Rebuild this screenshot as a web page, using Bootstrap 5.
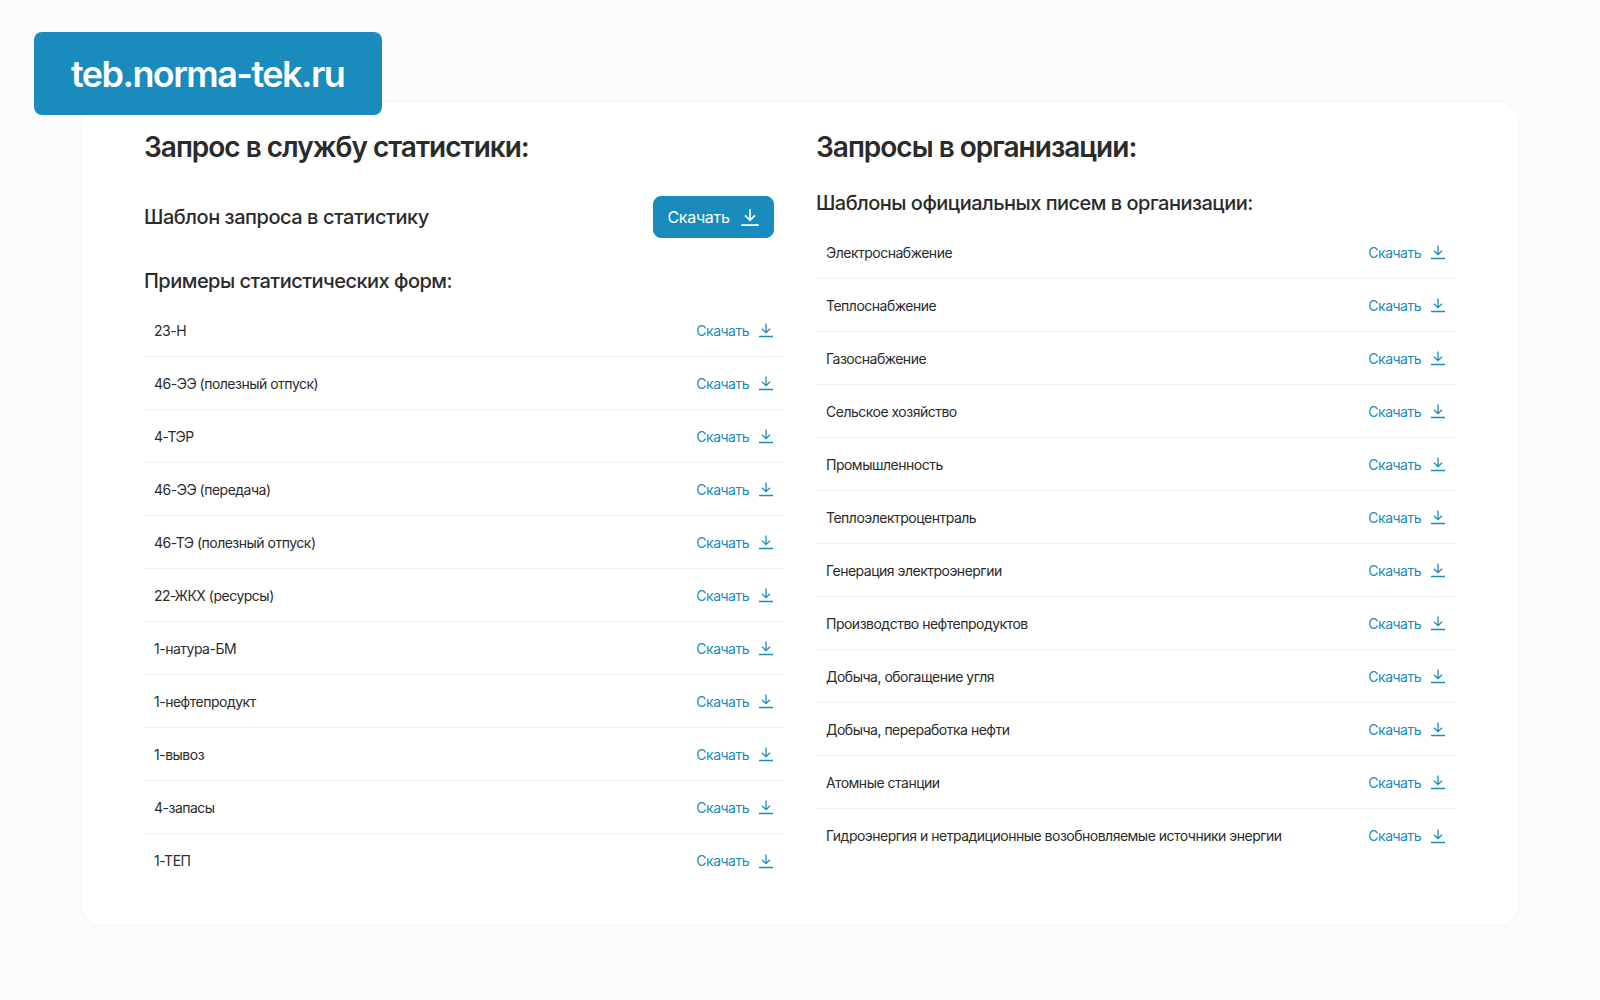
<!DOCTYPE html>
<html lang="ru"><head><meta charset="utf-8"><title>teb.norma-tek.ru</title>
<link href="https://cdn.jsdelivr.net/npm/bootstrap@5.3.0/dist/css/bootstrap.min.css" rel="stylesheet">
<style>
html,body{height:100%}
body{background:#fbfbfb;font-family:Inter,"Liberation Sans",sans-serif;color:#2b2b2b;overflow:hidden}
.page-wrap{padding:101px 81px 0;position:relative}
.site-tag{position:absolute;left:34px;top:32px;width:348px;height:83px;background:#1a8bbd;color:#fff;border-radius:8px;font-size:36px;font-weight:600;letter-spacing:-1.55px;line-height:85px;padding-left:37px}
.sheet{background:#fff;border:1px solid #f5f5f5;border-radius:20px;height:825px;padding:23px 62px 0;display:grid;grid-template-columns:640px 640px;column-gap:32px}
.col-title{font-size:28px;font-weight:600;line-height:44px;margin:0;letter-spacing:-1px;color:#2b2b2b}
.tpl-line{height:42px;margin-top:27px;padding-right:10px}
.tpl-name{font-size:20px;font-weight:450;line-height:24px;letter-spacing:-.46px}
.get-btn{width:121px;height:42px;background:#1a8bbd;border-color:#1a8bbd;color:#fff;border-radius:8px;font-size:16px;padding:0;letter-spacing:-.3px;gap:10px}
.get-btn:hover{background:#1a8bbd;color:#fff}
.sub-title{font-size:20px;font-weight:450;line-height:24px;margin:0;letter-spacing:-.52px}
.sub-a{margin-top:31px}
.sub-b{margin-top:22px}
.doc-list{margin-top:11px}
.doc-line{height:53px;padding:0 10px;border:0;border-bottom:1px solid #efefef;border-radius:0;font-size:14px;color:#2b2b2b;background:transparent;letter-spacing:-.5px}
.doc-line:last-child{border-bottom:0}
.doc-link{color:#1a8bbd;text-decoration:none;gap:9px}
</style></head><body>
<svg width="0" height="0" class="d-block"><defs><symbol id="dl" viewBox="0 0 16 16"><path d="M8 1.500v9M4 6.700 8 10.700l4-4M1 14.500h14" fill="none" stroke="currentColor" stroke-width="1.300"/></symbol></defs></svg>
<div class="page-wrap">
<div class="site-tag">teb.norma-tek.ru</div>
<div class="sheet">
<section>
<h2 class="col-title">Запрос в службу статистики:</h2>
<div class="tpl-line d-flex justify-content-between align-items-center">
<span class="tpl-name">Шаблон запроса в статистику</span>
<a class="btn get-btn d-inline-flex align-items-center justify-content-center" href="#">Скачать <svg width="20" height="20"><use href="#dl"/></svg></a>
</div>
<h3 class="sub-title sub-a">Примеры статистических форм:</h3>
<div class="list-group doc-list" id="left-list"></div>
</section>
<section>
<h2 class="col-title">Запросы в организации:</h2>
<h3 class="sub-title sub-b">Шаблоны официальных писем в организации:</h3>
<div class="list-group doc-list" id="right-list"></div>
</section>
</div>
</div>
<script>
const L=["23-Н","46-ЭЭ (полезный отпуск)","4-ТЭР","46-ЭЭ (передача)","46-ТЭ (полезный отпуск)","22-ЖКХ (ресурсы)","1-натура-БМ","1-нефтепродукт","1-вывоз","4-запасы","1-ТЕП"];
const R=["Электроснабжение","Теплоснабжение","Газоснабжение","Сельское хозяйство","Промышленность","Теплоэлектроцентраль","Генерация электроэнергии","Производство нефтепродуктов","Добыча, обогащение угля","Добыча, переработка нефти","Атомные станции","Гидроэнергия и нетрадиционные возобновляемые источники энергии"];
function fill(id,a){document.getElementById(id).innerHTML=a.map(t=>`<div class="list-group-item doc-line d-flex justify-content-between align-items-center"><span>${t}</span><a class="doc-link d-inline-flex align-items-center" href="#">Скачать<svg width="16" height="16"><use href="#dl"/></svg></a></div>`).join("")}
fill("left-list",L);fill("right-list",R);
</script>
<script src="https://cdn.jsdelivr.net/npm/bootstrap@5.3.0/dist/js/bootstrap.bundle.min.js"></script>
</body></html>
